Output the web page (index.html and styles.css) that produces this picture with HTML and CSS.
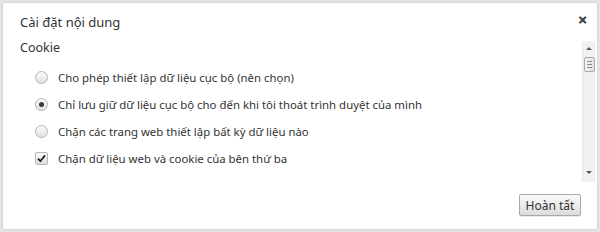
FILE: index.html
```html
<!DOCTYPE html>
<html lang="vi">
<head>
    <meta charset="UTF-8">
    <title>Cài đặt nội dung</title>
    <link rel="stylesheet" href="styles.css">
</head>
<body>
    <div class="dialog">
        <div class="header">
            <h1 class="title">Cài đặt nội dung</h1>
            <span class="close">&#x2715;</span>
        </div>

        <div class="body">
            <div class="content">
                <h2 class="section">Cookie</h2>
                <div class="options">
                    <label class="option">
                        <span class="radio"></span>
                        Cho phép thiết lập dữ liệu cục bộ (nên chọn)
                    </label>
                    <label class="option">
                        <span class="radio checked"></span>
                        Chỉ lưu giữ dữ liệu cục bộ cho đến khi tôi thoát trình duyệt của mình
                    </label>
                    <label class="option">
                        <span class="radio"></span>
                        Chặn các trang web thiết lập bất kỳ dữ liệu nào
                    </label>
                    <label class="option">
                        <span class="checkbox">
                            <svg width="9" height="9" viewBox="0 0 9 9"><path d="M1 4.6 L3.4 7.2 L8 1.4" fill="none" stroke="#222" stroke-width="1.8"/></svg>
                        </span>
                        Chặn dữ liệu web và cookie của bên thứ ba
                    </label>
                </div>
            </div>
            <!-- thanh cuộn vẽ tay -->
            <div class="scrollbar">
                <span class="arrow up"></span>
                <span class="thumb"><i></i><i></i><i></i></span>
                <span class="track"></span>
                <span class="arrow down"></span>
            </div>
        </div>

        <div class="footer">
            <button class="done">Hoàn tất</button>
        </div>
    </div>
</body>
</html>
```

FILE: styles.css
```css
body {
    margin: 0;
    background-color: #e6e6e6;
    font-family: "Noto Sans", "Open Sans", sans-serif;
    font-size: 11.4px;
    color: #333;
}
.dialog {
    margin: 3px;
    width: 594px;
    height: 226px;
    background-color: #fff;
    border-radius: 2px;
    box-shadow: 0 0 3px rgba(0, 0, 0, 0.15);
}
.header {
    display: flex;
    justify-content: space-between;
    align-items: flex-start;
    padding: 10px 10px 0 17px;
}
.title {
    margin: 0;
    font-size: 13px;
    font-weight: normal;
    line-height: 18px;
}
.close {
    margin-top: 1px;
    font-size: 11px;
    font-weight: bold;
    color: #444;
    line-height: 12px;
    -webkit-text-stroke: 0.4px #444;
}
.body {
    display: flex;
    margin-top: 10px;
    height: 141px;
}
.content {
    flex: 1;
    padding-left: 17px;
}
.section {
    margin: 0;
    font-size: 12.5px;
    font-weight: normal;
    line-height: 14px;
}
.options {
    margin-top: 9px;
}
.option {
    display: flex;
    align-items: center;
    height: 27px;
    padding-left: 15px;
}
.radio {
    width: 11px;
    height: 11px;
    margin-right: 10px;
    border: 1px solid #b5b5b5;
    border-radius: 50%;
    background: linear-gradient(#fafafa, #e2e2e2);
    display: flex;
    align-items: center;
    justify-content: center;
}
.radio.checked::after {
    content: "";
    width: 5px;
    height: 5px;
    border-radius: 50%;
    background-color: #3a3a3a;
}
.checkbox {
    width: 11px;
    height: 11px;
    margin-right: 10px;
    border: 1px solid #b5b5b5;
    border-radius: 2px;
    background: linear-gradient(#fafafa, #dedede);
    display: flex;
    align-items: center;
    justify-content: center;
}
.scrollbar {
    width: 12px;
    margin-right: 2px;
    background-color: #f1f1f1;
    border-left: 1px solid #e8e8e8;
    display: flex;
    flex-direction: column;
    align-items: center;
}
.arrow {
    width: 0;
    height: 0;
    border-left: 3px solid transparent;
    border-right: 3px solid transparent;
}
.arrow.up {
    margin-top: 6px;
    border-bottom: 3px solid #555;
}
.arrow.down {
    margin-bottom: 8px;
    border-top: 3px solid #555;
}
.thumb {
    margin-top: 7px;
    width: 9px;
    height: 13px;
    border: 1px solid #a9a9a9;
    border-radius: 2px;
    background: linear-gradient(to right, #f6f6f6, #e0e0e0);
    display: flex;
    flex-direction: column;
    align-items: center;
    justify-content: center;
    gap: 2px;
}
.thumb i {
    width: 5px;
    height: 1px;
    background-color: #888;
}
.track {
    flex: 1;
}
.footer {
    display: flex;
    justify-content: flex-end;
    padding: 12px 16px 0 0;
}
.done {
    width: 62px;
    height: 22px;
    padding: 0;
    font-family: inherit;
    font-size: 12px;
    color: #333;
    border: 1px solid #a8a8a8;
    border-radius: 2px;
    background: linear-gradient(#fbfbfb, #dcdcdc);
    box-shadow: 0 1px 0 rgba(0, 0, 0, 0.08);
}
```
